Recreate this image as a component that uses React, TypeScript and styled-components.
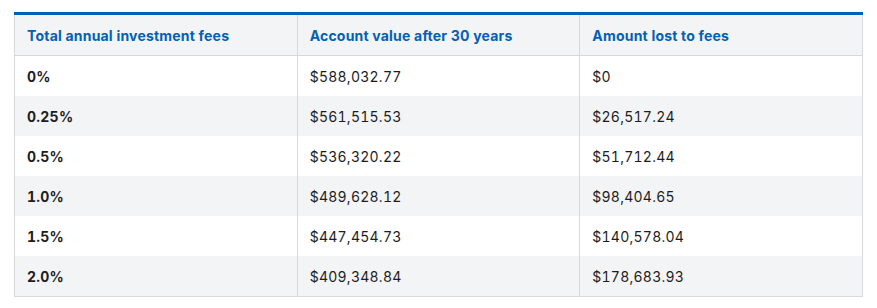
import React from "react";
import styled, { createGlobalStyle } from "styled-components";

const GlobalStyle = createGlobalStyle`
  html, body {
    margin: 0;
    padding: 0;
    background: #ffffff;
  }
  body {
    font-family: Inter, "Liberation Sans", Arial, sans-serif;
  }
`;

const Page = styled.div`
  padding: 12px 14px;
  width: 849px;
`;

const Table = styled.table`
  width: 100%;
  border-collapse: collapse;
  table-layout: fixed;
  border: 1px solid #d5d8dd;
  border-top: 3px solid #0061b5;
  font-size: 14px;
  color: #1d1d1d;
`;

const HeadCell = styled.th`
  height: 40px;
  padding: 0 12px;
  text-align: left;
  font-weight: 700;
  letter-spacing: 0.2px;
  color: #0061b5;
  background: #f3f4f6;
  border-left: 1px solid #d5d8dd;
  border-bottom: 1px solid #d5d8dd;
`;

const Row = styled.tr<{ $striped: boolean }>`
  background: ${(p) => (p.$striped ? "#f3f4f6" : "#ffffff")};
`;

const Cell = styled.td<{ $bold?: boolean }>`
  height: 40px;
  padding: 0 12px;
  font-weight: ${(p) => (p.$bold ? 700 : 400)};
  font-variant-numeric: tabular-nums;
  letter-spacing: 0.25px;
  border-left: 1px solid #d5d8dd;
`;

const rows = [
  ["0%", "$588,032.77", "$0"],
  ["0.25%", "$561,515.53", "$26,517.24"],
  ["0.5%", "$536,320.22", "$51,712.44"],
  ["1.0%", "$489,628.12", "$98,404.65"],
  ["1.5%", "$447,454.73", "$140,578.04"],
  ["2.0%", "$409,348.84", "$178,683.93"],
];

export default function App() {
  return (
    <Page>
      <GlobalStyle />
      <Table>
        <thead>
          <tr>
            <HeadCell>Total annual investment fees</HeadCell>
            <HeadCell>Account value after 30 years</HeadCell>
            <HeadCell>Amount lost to fees</HeadCell>
          </tr>
        </thead>
        <tbody>
          {rows.map((r, i) => (
            <Row key={r[0]} $striped={i % 2 === 1}>
              <Cell $bold>{r[0]}</Cell>
              <Cell>{r[1]}</Cell>
              <Cell>{r[2]}</Cell>
            </Row>
          ))}
        </tbody>
      </Table>
    </Page>
  );
}
